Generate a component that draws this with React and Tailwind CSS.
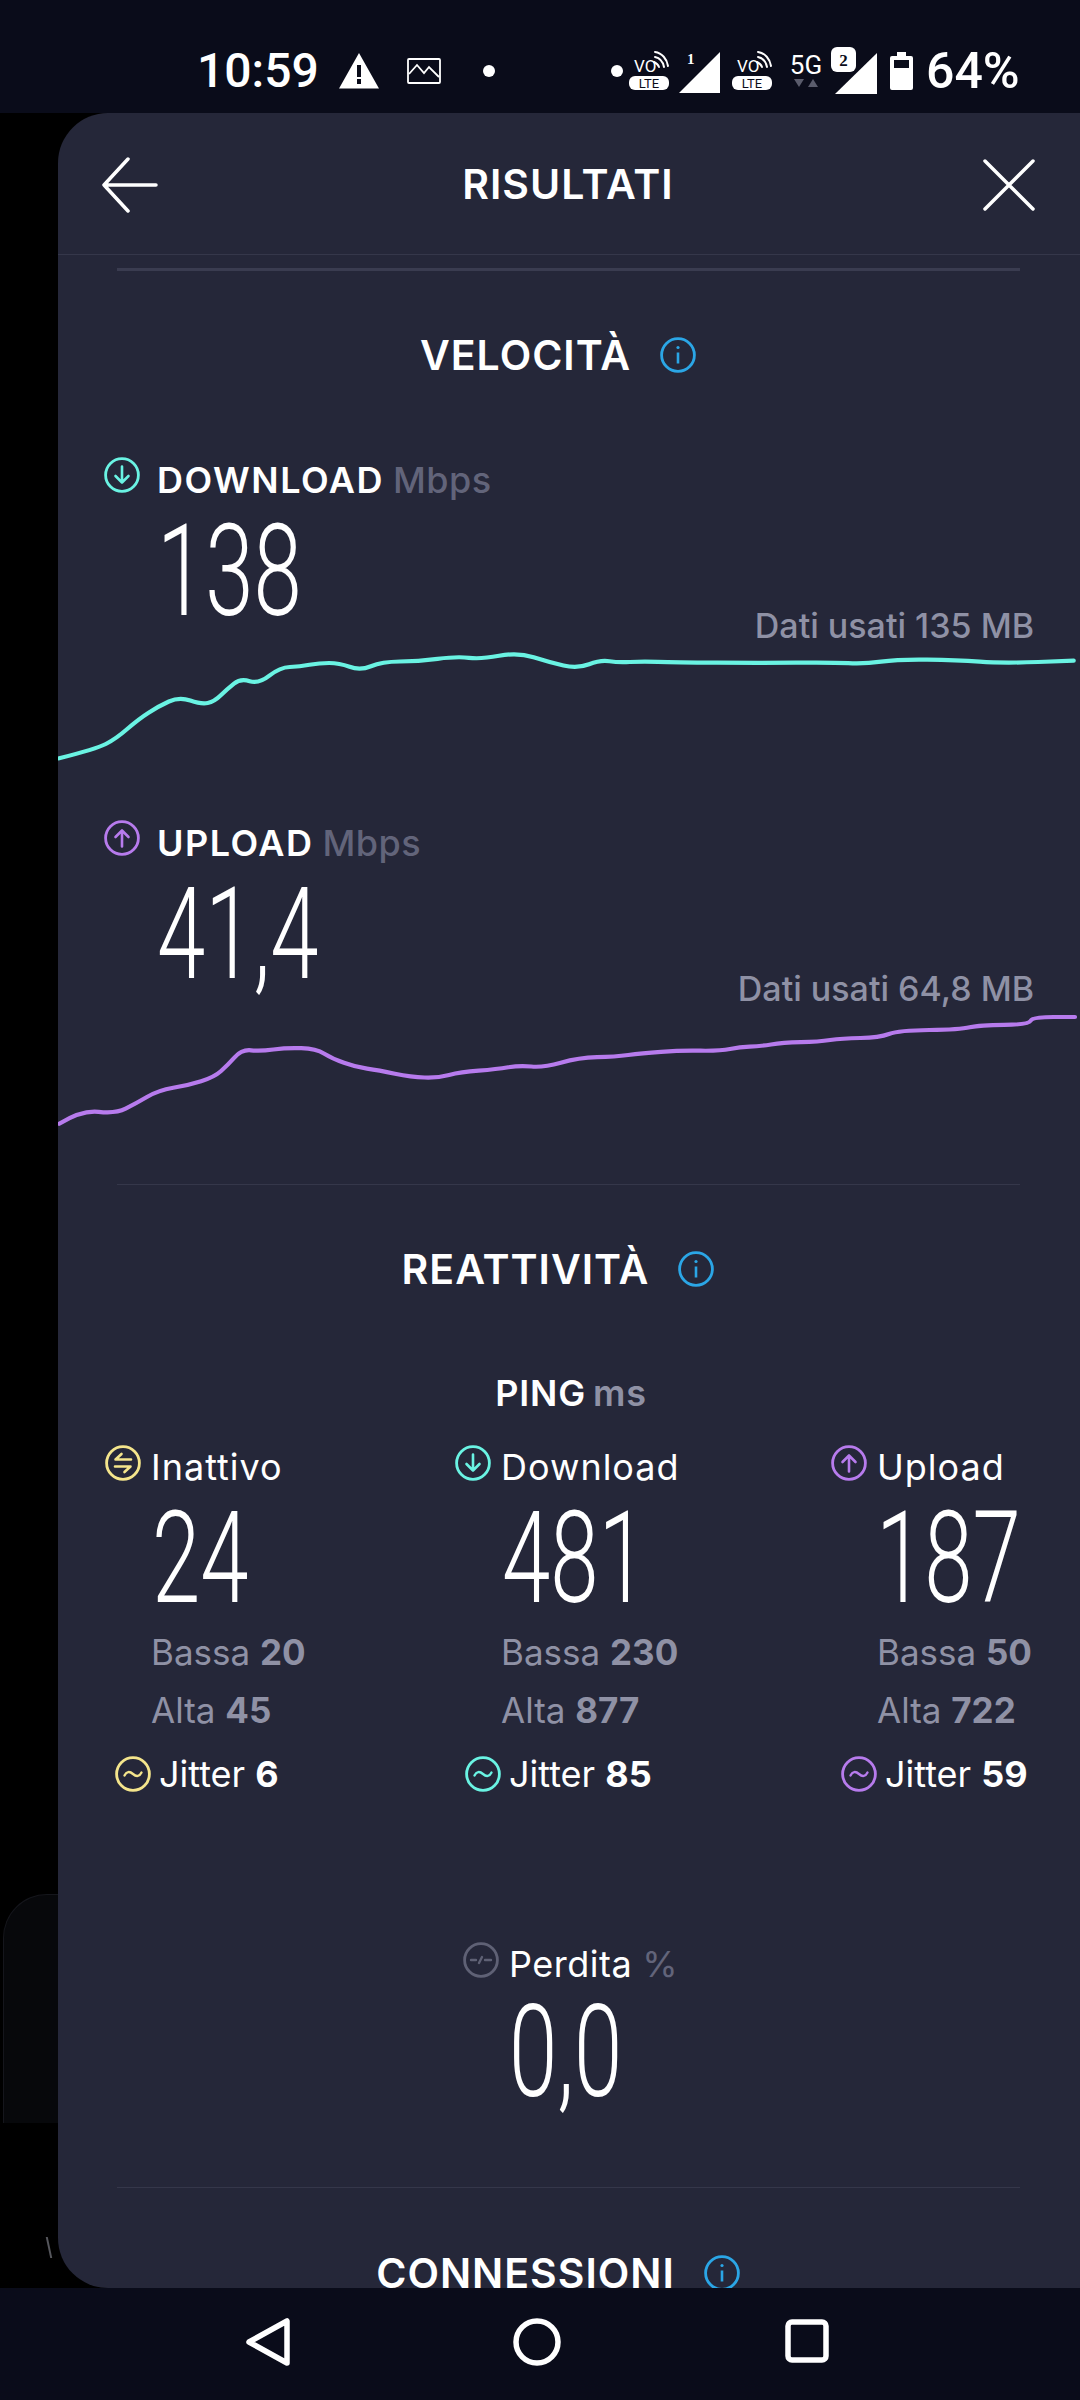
import React from 'react';

const sans = 'font-["Inter","Noto_Sans",sans-serif]';

const downloadPts = [[14,1378],[70,1350],[100,1320],[135,1260],[165,1222],[197,1193],[230,1216],[250,1208],[270,1170],[290,1138],[318,1155],[350,1105],[380,1103],[410,1092],[440,1092],[472,1115],[505,1088],[560,1087],[620,1072],[655,1081],[712,1060],[760,1090],[803,1109],[838,1082],[865,1091],[900,1087],[950,1090],[1080,1092],[1190,1090],[1240,1095],[1290,1081],[1380,1083],[1450,1093],[1558,1085]];
const uploadPts = [[14,1025],[48,984],[100,995],[130,965],[165,925],[210,910],[250,885],[270,850],[292,802],[320,808],[360,797],[405,800],[430,830],[465,855],[500,865],[550,885],[590,888],[625,870],[680,862],[715,850],[750,857],[805,827],[860,824],[900,814],[960,805],[1020,807],[1050,795],[1080,793],[1115,782],[1170,779],[1205,769],[1262,767],[1292,745],[1385,743],[1415,729],[1490,728],[1495,705],[1560,705]];

// coordinate misurate sullo screenshot, riportate a pixel pagina e smussate con i punti medi
const toPath = (pts, base) => {
  const p = pts.map(([x, y]) => [50 + x / 1.522, base + y / 3]);
  let d = `M${p[0][0].toFixed(1)} ${p[0][1].toFixed(1)}`;
  for (let i = 1; i < p.length - 1; i++) {
    const mx = (p[i][0] + p[i + 1][0]) / 2;
    const my = (p[i][1] + p[i + 1][1]) / 2;
    d += `Q${p[i][0].toFixed(1)} ${p[i][1].toFixed(1)} ${mx.toFixed(1)} ${my.toFixed(1)}`;
  }
  const last = p[p.length - 1];
  return `${d}L${last[0].toFixed(1)} ${last[1].toFixed(1)}`;
};

function Ring({ color, children, className = '' }) {
  return (
    <svg width="36" height="36" viewBox="0 0 36 36" fill="none" stroke={color} strokeLinecap="round" strokeLinejoin="round" className={`shrink-0 ${className}`}>
      <circle cx="18" cy="18" r="16.400" strokeWidth="2.8" />
      {children}
    </svg>
  );
}

const ArrowDown = ({ color, className }) => (
  <Ring color={color} className={className}><path d="M18 9.500v16M11.500 19l6.500 6.500 6.500-6.500" strokeWidth="2.6" /></Ring>
);
const ArrowUp = ({ color, className }) => (
  <Ring color={color} className={className}><path d="M18 26.500v-16M11.500 17l6.500-6.500 6.500 6.500" strokeWidth="2.6" /></Ring>
);
const Idle = ({ color, className }) => (
  <Ring color={color} className={className}>
    <path d="M26 14.500H10.500l6-5.500M10 21.500h15.500l-6 5.500" strokeWidth="2.6" />
  </Ring>
);
const Wave = ({ color, className }) => (
  <Ring color={color} className={className}>
    <path d="M9.500 19.500c2-4 5-4.500 8.500-1.500s6.500 2.500 8.500-1.500" strokeWidth="2.4" />
  </Ring>
);
const Loss = ({ className }) => (
  <Ring color="#5f6175" className={className}>
    <path d="M8 18h5M16 21l3-6M22 18h6" strokeWidth="2.4" />
  </Ring>
);

const Info = () => (
  <svg width="36" height="36" viewBox="0 0 36 36" fill="none" stroke="#2ba6e6" className="shrink-0">
    <circle cx="18" cy="18" r="16.400" strokeWidth="2.8" />
    <path d="M18 15.500v11" strokeWidth="2.6" />
    <circle cx="18" cy="10.500" r="1.600" fill="#2ba6e6" stroke="none" />
  </svg>
);

function SectionTitle({ title }) {
  return (
    <div className="flex h-10 items-center justify-center pr-[22px]">
      <span className={`${sans} text-[41px] font-semibold leading-none tracking-[1px] text-white`}>{title}</span>
      <span className="ml-[29px]"><Info /></span>
    </div>
  );
}

// numeri grandi condensati
function BigNum({ value, className = '' }) {
  return (
    <div className={`h-[92px] whitespace-nowrap font-["Roboto",sans-serif] text-[128px] font-light leading-[92px] text-white ${className}`}>
      <span className="inline-block origin-left scale-x-[0.68]">{value}</span>
    </div>
  );
}

function Chart({ pts, base, top, height, color }) {
  return (
    <svg viewBox={`58 ${top} 1022 ${height}`} className="block w-full" style={{ height }} fill="none">
      <path d={toPath(pts, base)} stroke={color} strokeWidth="4.200" strokeLinejoin="round" strokeLinecap="round" />
    </svg>
  );
}

function SpeedBlock({ Icon, color, label, value, used, pts, base, top, height }) {
  return (
    <div>
      <div className="flex h-10 items-center pl-[46px]">
        <Icon color={color} className="-mt-2 mr-[17px]" />
        <span className={`${sans} mt-[2px] text-[36px] font-semibold leading-none tracking-[1.500px] text-white`}>{label}</span>
        <span className={`${sans} ml-[9px] mt-[2px] text-[36px] font-medium leading-none tracking-[0.500px] text-[#62647a]`}>Mbps</span>
      </div>
      <BigNum value={value} className="mt-[26px] pl-[99px]" />
      <div className={`${sans} -mt-[11px] flex h-10 items-center justify-end pr-[46px] text-[34px] font-medium leading-none text-[#8f91a5]`}>{used}</div>
      <Chart pts={pts} base={base} top={top} height={height} color={color} />
    </div>
  );
}

function PingCol({ Icon, color, label, value, low, high, jitter, numPad = 'pl-[47px]' }) {
  return (
    <div className={sans}>
      <div className="flex h-10 items-center">
        <Icon color={color} className="-mt-2 mr-[10px]" />
        <span className="text-[36px] leading-none tracking-[1px] text-white">{label}</span>
      </div>
      <BigNum value={value} className={`mt-[25px] ${numPad}`} />
      <div className="mt-9 flex h-6 items-center pl-[46px] text-[35px] leading-none text-[#8f91a5]">
        <span>Bassa&nbsp;</span><b className="font-bold">{low}</b>
      </div>
      <div className="mt-[34px] flex h-6 items-center pl-[46px] text-[35px] leading-none text-[#8f91a5]">
        <span>Alta&nbsp;</span><b className="font-bold">{high}</b>
      </div>
      <div className="mt-[34px] flex h-9 items-center pl-[10px]">
        <Wave color={color} className="mr-[8px]" />
        <span className="text-[36px] leading-none text-white">Jitter&nbsp;</span>
        <b className="text-[36px] font-bold leading-none text-white">{jitter}</b>
      </div>
    </div>
  );
}

function VoLte() {
  return (
    <svg width="42" height="42" viewBox="0 0 42 42" fill="none">
      <text x="6" y="22" fontFamily="Roboto, sans-serif" fontSize="17" fill="#fff">VO</text>
      <path d="M27 7c5 1 8 5 9 10M27 2c7 1 12 7 13 14M26 12c2 1 4 2 5 5" stroke="#fff" strokeWidth="2" strokeLinecap="round" />
      <rect x="1" y="26" width="40" height="14" rx="6" fill="#fff" />
      <text x="21" y="37.500" textAnchor="middle" fontFamily="Roboto, sans-serif" fontSize="13" fill="#0a0c1a">LTE</text>
    </svg>
  );
}

function StatusBar() {
  return (
    <div className={`flex h-[113px] shrink-0 items-center bg-[#0a0c1a] pl-[197px] pt-[28px] font-["Roboto",sans-serif] text-white`}>
      <span className="w-[124px] text-[48px] font-medium leading-none">10:59</span>
      <svg width="40" height="36" viewBox="0 0 40 36" className="ml-[18px]">
        <path d="M20 0 40 35.500H0Z" fill="#fff" />
        <path d="M18 12h4v12h-4zM18 26h4v5h-4z" fill="#0a0c1a" />
      </svg>
      <svg width="34" height="26" viewBox="0 0 34 26" fill="none" stroke="#fff" strokeWidth="1.800" className="ml-7">
        <rect x="1" y="1" width="32" height="24" rx="1" />
        <path d="M2 16 10 7l7 8 5-6 10 10" />
      </svg>
      <span className="ml-[42px] size-3 rounded-full bg-white" />
      <span className="ml-[116px] size-3 rounded-full bg-white" />
      <span className="ml-[5px]"><VoLte /></span>
      <svg width="42" height="46" viewBox="0 0 42 46" className="ml-[9px]">
        <path d="M41 4v41H0Z" fill="#fff" />
        <text x="8" y="16" fontFamily="Liberation Serif, serif" fontWeight="700" fontSize="15" fill="#fff">1</text>
      </svg>
      <span className="ml-[10px]"><VoLte /></span>
      <div className="ml-4 flex w-[34px] flex-col items-center">
        <span className="text-[26px] leading-[22px]">5G</span>
        <svg width="28" height="8" viewBox="0 0 28 8" className="mt-[3px]" fill="#5a5c6c">
          <path d="M2 0h10L7 8ZM21 0l5 8H16Z" />
        </svg>
      </div>
      <svg width="48" height="48" viewBox="0 0 48 48" className="ml-[8px]">
        <path d="M46 6v41H4Z" fill="#fff" />
        <rect x="0" y="0" width="25" height="25" rx="6" fill="#fff" />
        <text x="12.500" y="19" textAnchor="middle" fontFamily="Liberation Serif, serif" fontWeight="700" fontSize="17" fill="#0a0c1a">2</text>
      </svg>
      <svg width="23" height="38" viewBox="0 0 23 38" className="ml-[11px]">
        <path d="M7 0h9v4h5a2 2 0 0 1 2 2v30a2 2 0 0 1-2 2H2a2 2 0 0 1-2-2V6a2 2 0 0 1 2-2h5Z" fill="#fff" />
        <rect x="4" y="8" width="15" height="8" fill="#0a0c1a" />
      </svg>
      <span className="ml-[13px] text-[50px] font-medium leading-none">64%</span>
    </div>
  );
}

function NavBar() {
  return (
    <div className="flex h-[112px] shrink-0 items-start bg-[#0a0c1a] pl-[246px] pt-[30px]">
      <svg width="44" height="48" viewBox="0 0 44 48" fill="none" stroke="#fff" strokeWidth="5.500" strokeLinejoin="round">
        <path d="M41 3v42L3 24Z" />
      </svg>
      <svg width="48" height="48" viewBox="0 0 48 48" fill="none" stroke="#fff" strokeWidth="5.500" className="ml-[223px]">
        <circle cx="24" cy="24" r="21" />
      </svg>
      <svg width="44" height="46" viewBox="0 0 44 46" fill="none" stroke="#fff" strokeWidth="5.500" className="ml-[224px]">
        <rect x="3" y="4" width="38" height="38" rx="4" />
      </svg>
    </div>
  );
}

export default function App() {
  return (
    <div className="flex h-[2400px] w-[1080px] flex-col overflow-hidden bg-black">
      <StatusBar />
      <div className="relative flex min-h-0 flex-1 bg-black pl-[58px]">
        {/* scheda sottostante appena visibile */}
        <div className="absolute left-[3px] top-[1781px] h-[229px] w-[80px] rounded-tl-[44px] border-l border-t border-[#15161c] bg-[#07080b]" />
        <div className="absolute left-[48px] top-[2124px] h-[21px] w-[5px] skew-x-[12deg] border-l-2 border-[#55565c]" />

        <div className="relative min-w-0 flex-1 overflow-hidden rounded-l-[50px] bg-[#252739]">
          <div className="relative flex h-[142px] items-center justify-center border-b border-[#35374a]">
            <svg width="56" height="56" viewBox="0 0 56 56" fill="none" stroke="#fff" strokeWidth="3.500" strokeLinecap="round" strokeLinejoin="round" className="absolute left-[44px] top-[44px]">
              <path d="M26 2 2 28l24 26M2 28h52" />
            </svg>
            <span className={`${sans} -ml-[2px] mt-[1px] text-[41px] font-semibold leading-none tracking-[1px] text-white`}>RISULTATI</span>
            <svg width="52" height="52" viewBox="0 0 52 52" fill="none" stroke="#fff" strokeWidth="3.500" strokeLinecap="round" className="absolute right-[45px] top-[46px]">
              <path d="M2 2l48 48M50 2 2 50" />
            </svg>
          </div>
          <div className="ml-[59px] mr-[60px] mt-[13px] h-[3px] bg-[#3a3c50]" />

          <div className="mt-[64px]"><SectionTitle title="VELOCITÀ" /></div>

          <div className="mt-[84px]">
            <SpeedBlock Icon={ArrowDown} color="#6af3e3" label="DOWNLOAD" value="138" used="Dati usati 135 MB" pts={downloadPts} base={300} top={647} height={136} />
          </div>
          <div className="mt-[40px]">
            <SpeedBlock Icon={ArrowUp} color="#b77bed" label="UPLOAD" value="41,4" used="Dati usati 64,8 MB" pts={uploadPts} base={780} top={1007} height={129} />
          </div>

          <div className="ml-[59px] mr-[60px] mt-[46px] h-px bg-[#35374a]" />
          <div className="mt-[64px]"><SectionTitle title="REATTIVITÀ" /></div>

          <div className={`${sans} mt-[84px] flex h-10 items-center justify-center pl-[4px] text-[36px] leading-none tracking-[0.800px]`}>
            <span className="font-semibold text-white">PING</span>
            <span className="ml-[7px] font-semibold text-[#8f91a5]">ms</span>
          </div>

          <div className="mt-[34px] grid grid-cols-[350px_376px_1fr] pl-[47px]">
            <PingCol Icon={Idle} color="#f4e58c" label="Inattivo" value="24" low="20" high="45" jitter="6" />
            <PingCol Icon={ArrowDown} color="#6af3e3" label="Download" value="481" low="230" high="877" jitter="85" />
            <PingCol Icon={ArrowUp} color="#b77bed" label="Upload" value="187" low="50" high="722" jitter="59" numPad="pl-[45px]" />
          </div>

          <div className={`${sans} mt-[152px] flex flex-col pl-[405px]`}>
            <div className="flex h-10 items-center">
              <Loss className="-mt-2 mr-[10px]" />
              <span className="text-[36px] leading-none tracking-[0.500px] text-white">Perdita</span>
              <span className="ml-[10px] text-[36px] leading-none text-[#62647a]">%</span>
            </div>
            <BigNum value="0,0" className="mt-[22px] pl-[46px]" />
          </div>

          <div className="ml-[59px] mr-[60px] mt-[89px] h-px bg-[#35374a]" />
          <div className="mt-[65px]"><SectionTitle title="CONNESSIONI" /></div>
        </div>
      </div>
      <NavBar />
    </div>
  );
}
